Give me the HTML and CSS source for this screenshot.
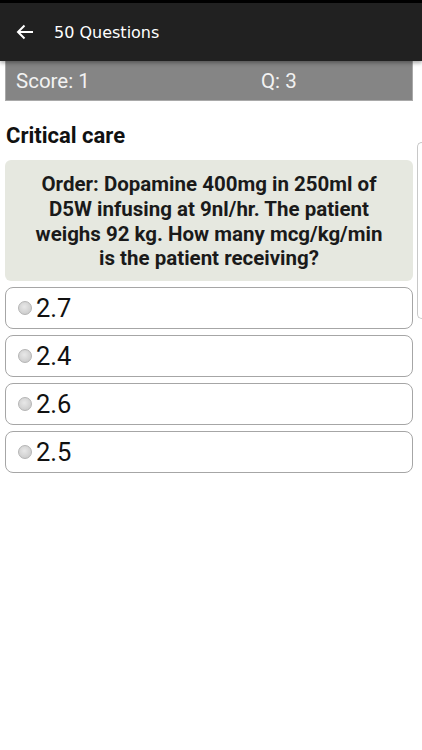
FILE: index.html
```html
<!DOCTYPE html>
<html>
<head>
<meta charset="utf-8">
<link rel="stylesheet" href="styles.css">
</head>
<body>
<div class="status"></div>
<header class="appbar">
  <svg class="back" width="18" height="16" viewBox="0 0 18 16"><path d="M17 8H2M8.5 1.5L2 8l6.5 6.5" fill="none" stroke="#fff" stroke-width="2"/></svg>
  <span class="title">50 Questions</span>
</header>
<main class="content">
  <div class="scorebar">
    <span class="score">Score: 1</span>
    <span class="qnum">Q: 3</span>
  </div>
  <div class="pager">
    <section class="card">
      <h2 class="category">Critical care</h2>
      <div class="question">Order: Dopamine 400mg in 250ml of D5W infusing at 9nl/hr. The patient weighs 92 kg. How many mcg/kg/min is the patient receiving?</div>
      <div class="options">
        <label class="option"><span class="radio"></span><span class="opt-text">2.7</span></label>
        <label class="option"><span class="radio"></span><span class="opt-text">2.4</span></label>
        <label class="option"><span class="radio"></span><span class="opt-text">2.6</span></label>
        <label class="option"><span class="radio"></span><span class="opt-text">2.5</span></label>
      </div>
    </section>
    <div class="peek"></div>
  </div>
</main>
</body>
</html>
```
FILE: styles.css
```css
* { box-sizing: border-box; }
html, body { margin: 0; padding: 0; }
body {
  width: 422px;
  height: 750px;
  background: #fff;
  font-family: Roboto, "Liberation Sans", sans-serif;
  overflow: hidden;
}
.status { height: 3px; background: #000; }
.appbar {
  height: 58px;
  background: #212121;
  display: flex;
  align-items: center;
  padding-left: 16px;
  box-shadow: 0 2px 4px rgba(0,0,0,0.35);
  position: relative;
  z-index: 2;
}
.back { display: block; margin-right: 20px; }
.title {
  color: #fff;
  font-family: "DejaVu Sans", sans-serif;
  font-size: 16px;
}
.content { padding: 0 9px 0 5px; }
.scorebar {
  height: 40px;
  background: #858585;
  border: 1px solid #a9a9a9;
  border-top: none;
  display: flex;
  align-items: center;
  padding-left: 10px;
  color: #f2f2f2;
  font-size: 20.5px;
}
.score { width: 245px; }
.pager { position: relative; }
.card { width: 408px; }
.category {
  margin: 0;
  padding: 22px 0 0 1px;
  height: 59px;
  font-size: 22px;
  font-weight: bold;
  color: #111;
}
.question {
  background: #e6e8e0;
  border-radius: 6px;
  padding: 12px 30px 10px;
  text-align: center;
  font-size: 20.5px;
  font-weight: bold;
  line-height: 24.8px;
  color: #1a1a1a;
}
.options {
  display: flex;
  flex-direction: column;
  gap: 6px;
  margin-top: 6px;
}
.option {
  height: 42px;
  border: 1px solid #a6a6a6;
  border-radius: 8px;
  display: flex;
  align-items: center;
  padding-left: 12px;
}
.radio {
  width: 14px;
  height: 14px;
  border-radius: 50%;
  border: 1px solid #b4b4b4;
  background: radial-gradient(circle at 45% 40%, #e8e8e8 0%, #cfcfcf 70%, #c2c2c2 100%);
  margin-right: 4px;
}
.opt-text {
  font-size: 25.5px;
  color: #111;
}
.peek {
  position: absolute;
  left: 412px;
  top: 41px;
  width: 5px;
  height: 177px;
  border: 1px solid #c8c8c8;
  border-right: none;
  border-radius: 10px 0 0 10px;
}
```
